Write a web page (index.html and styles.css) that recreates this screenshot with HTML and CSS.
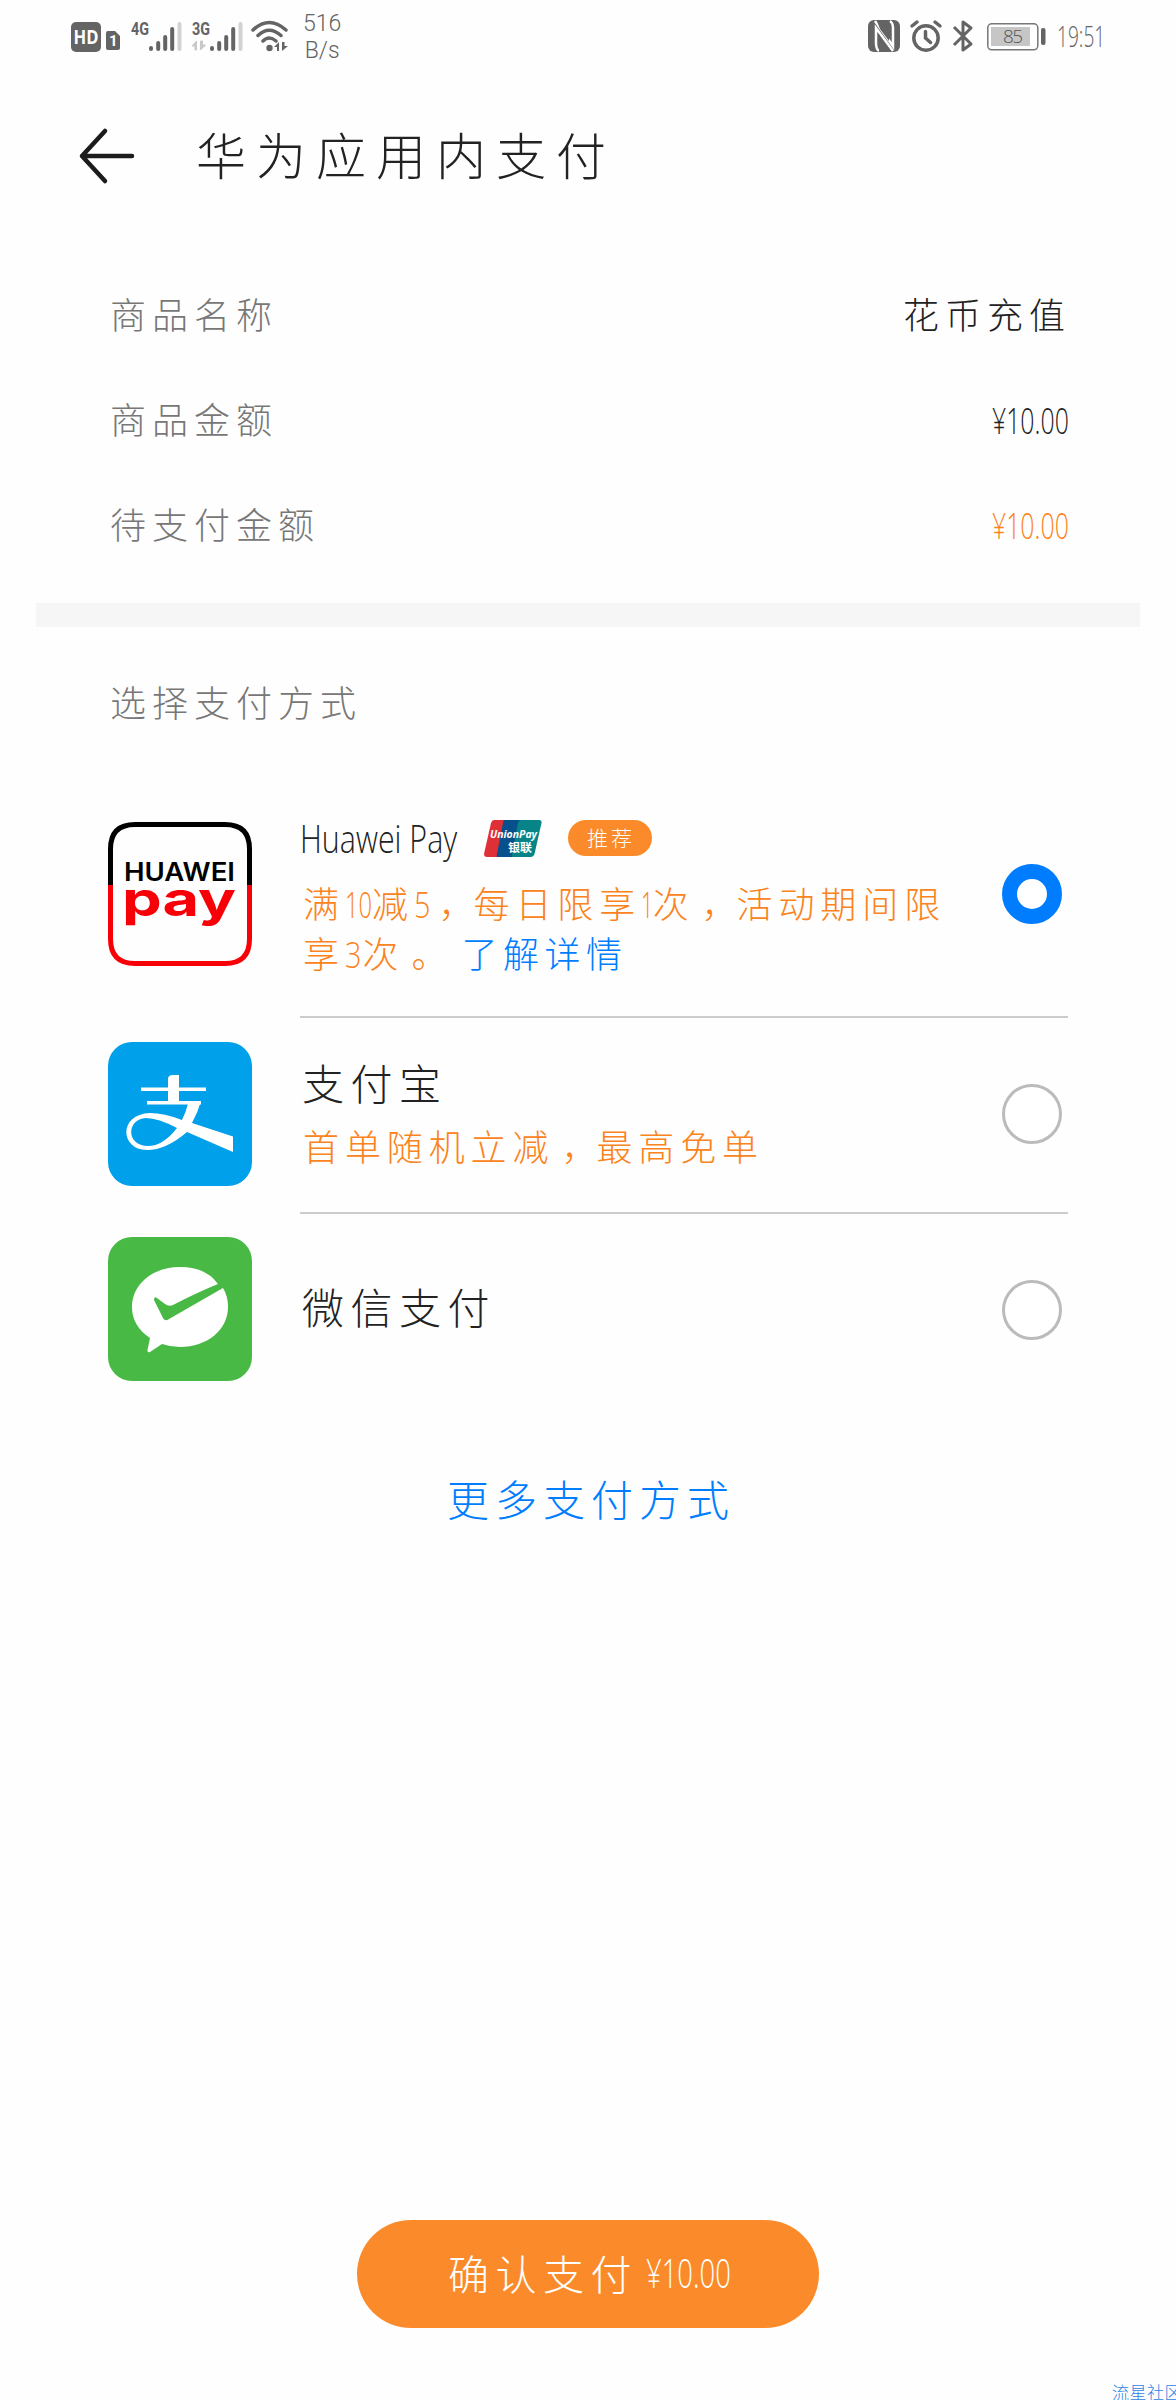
FILE: index.html
```html
<!DOCTYPE html>
<html lang="zh-CN">
<head>
<meta charset="utf-8">
<title>华为应用内支付</title>
<link rel="stylesheet" href="styles.css">
</head>
<body>
<div class="screen">
  <header class="status">
    <div class="status-left">
      <svg width="30" height="30" viewBox="0 0 30 30"><rect width="30" height="30" rx="5" fill="#646464"/><text x="2.5" y="22" class="hd" textLength="25" lengthAdjust="spacingAndGlyphs">HD</text></svg>
      <svg class="sim" width="14" height="19" viewBox="0 0 14 19"><path d="M2 0h7l5 5v12q0 2-2 2H2q-2 0-2-2V2q0-2 2-2z" fill="#646464"/><text x="3" y="15" class="sim-no">1</text></svg>
      <svg class="cell" width="52" height="32" viewBox="0 0 52 32"><text x="0" y="14.500" class="gen" textLength="18" lengthAdjust="spacingAndGlyphs">4G</text><g stroke="#646464" stroke-width="4" stroke-linecap="round"><path d="M20 29v-1M27.200 29v-6M34.200 29v-12M41.200 29V9"/><path d="M48.500 29V4" stroke="#d2d2d2"/></g></svg>
      <svg class="cell2" width="52" height="32" viewBox="0 0 52 32"><text x="0" y="14.500" class="gen" textLength="18" lengthAdjust="spacingAndGlyphs">3G</text><path d="M4.500 30V21L0 26h3v4zM8.500 21v9l5-5h-3v-4z" fill="#c8c8c8" stroke="#c8c8c8"/><g stroke="#646464" stroke-width="4" stroke-linecap="round"><path d="M20 29v-1M27.200 29v-6M34.200 29v-12M41.200 29V9"/><path d="M48.500 29V4" stroke="#d2d2d2"/></g></svg>
      <svg class="wifi" width="38" height="32" viewBox="0 0 38 32"><g fill="none" stroke="#646464" stroke-width="3.500" stroke-linecap="round"><path d="M2 10Q18 -5 35 10M7 15.500Q18 5 30 15.500M12 21Q18 15 25 21"/></g><circle cx="18.500" cy="28" r="3.200" fill="#646464"/><path d="M28 31v-9l-5 5h3v4zM31 22v9l6-5h-3.500v-4z" fill="#646464"/></svg>
      <div class="speed"><span>516</span><span>B/s</span></div>
    </div>
    <div class="status-right">
      <svg width="32" height="32" viewBox="0 0 32 32"><rect width="32" height="32" rx="6" fill="#646464"/><path d="M7 1L25 26V8q0-5-3-7M25 31L8 8v15q0 6 3 8" fill="none" stroke="#fff" stroke-width="2.500"/><path d="M12 9l9 12V9L15 1H9zM11 14v17h8z" fill="#646464"/></svg>
      <svg class="alarm" width="32" height="32" viewBox="0 0 32 32"><g fill="none" stroke="#646464" stroke-width="3.500" stroke-linecap="round"><circle cx="16" cy="18" r="12.200"/><path d="M15.500 11.500V18l5 4.500M2 6l5-4M30 6l-5-4"/></g></svg>
      <svg class="bt" width="20" height="32" viewBox="0 0 20 32"><path d="M1 7l17 17-8 6V2l8 6L1 25" fill="none" stroke="#646464" stroke-width="3" stroke-linejoin="round"/></svg>
      <svg class="batt" width="59" height="28" viewBox="0 0 59 28"><rect x=".8" y=".8" width="50" height="26" rx="4" fill="#fff" stroke="#777" stroke-width="1.500"/><rect x="4" y="4" width="39" height="19" fill="#c6c6c6"/><rect x="54" y="5" width="4.500" height="17" rx="2" fill="#646464"/><text x="16" y="20" class="pct" textLength="20">85</text></svg>
      <span class="clock"><span class="squeeze">19:51</span></span>
    </div>
  </header>

  <div class="titlebar">
    <svg width="56" height="56" viewBox="0 0 56 56"><path d="M53 28H3M26 3L3 28l23 25" fill="none" stroke="#1c1c1c" stroke-width="4.500" stroke-linecap="round" stroke-linejoin="round"/></svg>
    <h1>华为应用内支付</h1>
  </div>

  <dl class="order">
    <div class="row"><dt>商品名称</dt><dd>花币充值</dd></div>
    <div class="row"><dt>商品金额</dt><dd><span class="price">¥10.00</span></dd></div>
    <div class="row"><dt>待支付金额</dt><dd class="due"><span class="price">¥10.00</span></dd></div>
  </dl>
  <div class="band"></div>

  <h2>选择支付方式</h2>
  <main class="methods">
    <section class="method first">
      <svg class="logo" width="144" height="144" viewBox="0 0 144 144"><path d="M2.500 63V27Q2.500 2.500 27 2.500h90q24.500 0 24.500 24.500V63" fill="none" stroke="#000" stroke-width="5"/><path d="M2.500 63v54q0 24.500 24.500 24.500h90q24.500 0 24.500-24.500V63" fill="none" stroke="#f80008" stroke-width="5"/><text x="16" y="59" class="logo-top" textLength="111" lengthAdjust="spacingAndGlyphs">HUAWEI</text><text x="14" y="94" class="logo-pay" textLength="114" lengthAdjust="spacingAndGlyphs">pay</text></svg>
      <div class="info">
        <div class="name">
          <span class="latin"><span class="squeeze">Huawei Pay</span></span>
          <svg class="union" width="58" height="37" viewBox="0 0 58 37"><path d="M10 0h14l-8 37H3q-3 0-3-3L7 3q1-3 3-3z" fill="#df3038"/><path d="M21 0h18l-8 37H14q-2 0-1-3l6-31q0-3 2-3z" fill="#07508c"/><path d="M37 0h18q3 0 2.500 3l-7 31q-1 3-4 3H29q-2 0-1-3l6-31q1-3 3-3z" fill="#078487"/><text x="6" y="18" class="union-en" textLength="47" lengthAdjust="spacingAndGlyphs">UnionPay</text><text x="24" y="32" class="union-cn" textLength="24" lengthAdjust="spacingAndGlyphs">银联</text></svg>
          <span class="badge">推荐</span>
        </div>
        <p class="promo">满<i class="n2">10</i>减<i class="n1">5</i><b>，</b>每日限享<i class="n0">1</i>次<b>，</b>活动期间限<br>享<i class="n1">3</i>次<b>。</b><a class="more-info">了解详情</a></p>
      </div>
      <span class="radio on"></span>
    </section>
    <section class="method second">
      <svg class="logo" width="144" height="144" viewBox="0 0 144 144"><rect width="144" height="144" rx="24" fill="#00a0ea"/><g fill="#fff"><path d="M60 59V37q0-4 5-4h6v26zM33 45.500h65v3.500H33zM39 59h54v3.500H39z"/><path fill-rule="evenodd" d="M80.500 60L93 59Q90 70 84 81L125 94.500V110L79 90Q58 108 39 108C12 108 10 72 42 71Q56 71 74 78Q78 70 80.500 60ZM69 86Q50 76 38 76C18 77 18 104 40 104Q55 104 69 86Z"/></g></svg>
      <div class="info">
        <div class="name">支付宝</div>
        <p class="promo">首单随机立减<b>，</b>最高免单</p>
      </div>
      <span class="radio"></span>
    </section>
    <section class="method third">
      <svg class="logo" width="144" height="144" viewBox="0 0 144 144"><rect width="144" height="144" rx="24" fill="#48b944"/><path d="M42 101Q24 89 24 70C24 47 45 30 72 30Q98 30 110 47Q90 55 65 68Q61 70 57 67L49 61Q46 59 46 63L55 81Q57 85 61 82L115 51Q120 59 120 70C120 93 99 110 72 110Q63 110 54 107L42 115Q39 116 39.500 113Z" fill="#fff"/></svg>
      <div class="info"><div class="name">微信支付</div></div>
      <span class="radio"></span>
    </section>
  </main>
  <a class="more">更多支付方式</a>
  <button class="pay"><span>确认支付</span><span class="price">¥10.00</span></button>
  <div class="mark">流星社区</div>
</div>
</body>
</html>
```
FILE: styles.css
```css
* { box-sizing: border-box; }
body { margin: 0; background: #fefefe; }
.screen {
  width: 1176px; height: 2400px; overflow: hidden; position: relative;
  display: flex; flex-direction: column;
  font-family: "Noto Sans CJK SC", sans-serif; font-weight: 300; color: #222;
  white-space: nowrap;
}
.screen > * { flex-shrink: 0; }
svg { display: block; flex: none; letter-spacing: 0; overflow: visible; }
h1, h2, p, dl, dd { margin: 0; font-weight: 300; }
i, b { font-style: normal; font-weight: 300; }

.status { height: 72px; padding: 0 71px 0; display: flex; justify-content: space-between; align-items: flex-start; color: #646464; }
.status-left { display: flex; padding-top: 22px; }
.sim { margin: 9px 0 0 5px; }
.cell { margin: -2px 0 0 11px; }
.cell2 { margin: -2px 0 0 9px; }
.wifi { margin: -2px 0 0 7px; }
.speed { display: flex; flex-direction: column; align-items: center; margin: -12px 0 0 14px; font: 300 23px/27px Roboto, sans-serif; }
.status-right { display: flex; padding-top: 20px; }
.alarm { margin-left: 10px; }
.bt { margin-left: 11px; }
.batt { margin: 3px 0 0 14px; }
.clock { width: 46px; margin: 1px 2px 0 11px; font: 300 29px/30px "Open Sans", sans-serif; }
.clock .squeeze { transform: scaleX(.66); }
.squeeze { display: inline-block; transform-origin: left center; }
.hd { font: 700 19px "Open Sans", sans-serif; fill: #fff; }
.sim-no { font: 700 15px Roboto, sans-serif; fill: #fff; }
.gen { font: 700 19px Roboto, sans-serif; fill: #646464; }
.pct { font: 300 19px "Open Sans", sans-serif; fill: #555; }

.titlebar { height: 168px; padding: 0 79px; display: flex; align-items: center; gap: 61px; }
h1 { font-size: 50px; letter-spacing: 10px; line-height: 60px; padding-bottom: 6px; height: 60px; margin-top: -6px; }

.order { padding: 20px 108px 0 110px; height: 363px; }
.row { height: 105px; display: flex; justify-content: space-between; align-items: center; }
.row dt { font-size: 36px; letter-spacing: 6px; color: #777; }
.row dd { font-size: 36px; letter-spacing: 6px; }
.row dd:not(:has(.price)) { margin-right: -3px; }
.row .due { color: #fb8320; }
.price { display: inline-block; width: 76px; font: 300 36px/44px "Open Sans", sans-serif; letter-spacing: 0; transform: scaleX(.69); transform-origin: left center; }
.band { height: 24px; margin: 0 36px; background: #f6f6f6; }
h2 { padding: 47px 0 0 110px; height: 174px; font-size: 36px; line-height: 54px; letter-spacing: 6px; color: #777; }

.method { display: flex; padding: 0 108px 0 108px; position: relative; }
.first { height: 217px; padding-top: 21px; }
.second { height: 196px; padding-top: 24px; }
.third { height: 189px; padding-top: 23px; }
.info { width: 768px; margin-left: 48px; }
.first .info, .second .info { border-bottom: 2px solid #ccc; }
.name { font-size: 42px; line-height: 60px; letter-spacing: 6.500px; padding-left: 2px; }
.first .name { display: flex; align-items: center; height: 50px; margin-top: -9px; padding: 0; }
.second .name { margin-top: 10px; }
.third .name { margin-top: 39px; }
.latin { width: 184px; font: 300 38px/50px "Open Sans", sans-serif; letter-spacing: 0; }
.latin .squeeze { transform: scaleX(.8); }
.union { margin-right: 26px; }
.union-en { font: italic 700 11px "Open Sans", sans-serif; fill: #fff; }
.union-cn { font: 700 11px "Noto Sans CJK SC", sans-serif; fill: #fff; }
.logo-top { font: 600 25px Inter, sans-serif; fill: #000; }
.logo-pay { font: 700 48px Inter, sans-serif; fill: #f80008; }
.badge { width: 84px; height: 36px; border-radius: 18px; background: #fb8b2a; color: #fff; font-size: 21px; line-height: 34px; letter-spacing: 3px; text-align: center; padding-left: 2px; }
.promo { font-size: 36px; line-height: 50px; letter-spacing: 5.900px; padding-left: 3px; color: #fb8320; }
.first .promo { margin-top: 14px; }
.second .promo { margin-top: 6px; line-height: 54px; }
.promo i { display: inline-block; font-family: "Open Sans", sans-serif; line-height: 36px; letter-spacing: 0; transform-origin: left center; }
.n0 { transform: scaleX(.6); margin-right: -9px; }
.n1 { transform: scaleX(.8); margin-right: -3px; }
.n2 { transform: scaleX(.66); margin-right: -14px; }
.promo b { display: inline-block; width: 42px; line-height: 50px; text-indent: 7px; }
.more-info { color: #007dff; margin-left: 15px; letter-spacing: 5.500px; }
.radio { position: absolute; left: 1002px; top: 63px; width: 60px; height: 60px; border-radius: 50%; border: 3px solid #bbb; background: #fff; }
.second .radio, .third .radio { top: 66px; }
.radio.on { border: 15px solid #007dff; }

.more { height: 60px; margin-top: 65px; text-align: center; font-size: 42px; line-height: 60px; letter-spacing: 6px; padding-left: 6px; color: #007dff; }
.pay { width: 462px; height: 108px; margin: 692px auto 0 357px; padding: 0 0 4px 91px; border: 0; border-radius: 54px; background: #fb8b2a; color: #fff; display: flex; align-items: center; font: 300 41px/60px "Noto Sans CJK SC", sans-serif; letter-spacing: 6.500px; }
.pay .price { font-size: 41px; transform: scaleX(.67); margin-left: 8px; }
.mark { margin: 53px 0 0 1112px; font-size: 17px; line-height: 22px; color: #2b84e4; letter-spacing: .5px; }
```
